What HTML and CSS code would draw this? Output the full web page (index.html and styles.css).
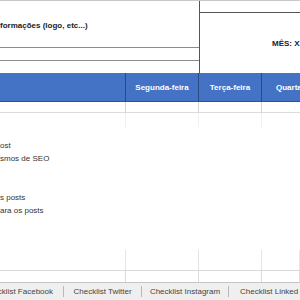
FILE: index.html
```html
<!DOCTYPE html>
<html lang="pt">
<head>
<meta charset="utf-8">
<link rel="stylesheet" href="styles.css">
</head>
<body>
<div class="sheet">
  <div class="top">
    <div class="info">
      <div class="info-title">formações (logo, etc...)</div>
      <div class="info-row"></div>
      <div class="info-row last"></div>
    </div>
    <div class="month">
      <div class="month-strip"></div>
      <div class="month-label">MÊS: XX</div>
    </div>
  </div>
  <div class="head">
    <div class="hcell"></div>
    <div class="hcell">Segunda-feira</div>
    <div class="hcell">Terça-feira</div>
    <div class="hcell last">Quarta-feira</div>
  </div>
  <div class="row r1">
    <div class="cell"></div><div class="cell"></div><div class="cell"></div><div class="cell"></div>
  </div>
  <div class="row r2">
    <div class="cell"></div><div class="cell"></div><div class="cell"></div><div class="cell"></div>
  </div>
  <div class="notes">
    <div class="note">ost</div>
    <div class="note">smos de SEO</div>
    <div class="note"></div>
    <div class="note"></div>
    <div class="note">s posts</div>
    <div class="note">ara os posts</div>
  </div>
  <div class="row r3">
    <div class="cell"></div><div class="cell"></div><div class="cell"></div><div class="cell"></div>
  </div>
  <div class="row r4">
    <div class="cell"></div><div class="cell"></div><div class="cell"></div><div class="cell"></div>
  </div>
  <div class="tabs">
    <div class="tab first"><span>Checklist Facebook</span></div>
    <div class="tab w2"><span>Checklist Twitter</span></div>
    <div class="tab w3"><span>Checklist Instagram</span></div>
    <div class="tab w4"><span>Checklist Linked In</span></div>
  </div>
</div>
</body>
</html>
```
FILE: styles.css
```css
* { box-sizing: border-box; }
html, body { margin: 0; padding: 0; background: #fff; }
.sheet {
  width: 300px;
  height: 300px;
  overflow: hidden;
  display: flex;
  flex-direction: column;
  font-family: "Liberation Sans", Arial, sans-serif;
  color: #222;
}
.top {
  height: 73px;
  flex: none;
  display: grid;
  grid-template-columns: 199px 1fr;
  border-top: 1px solid #c8c8c8;
}
.info {
  display: grid;
  grid-template-rows: 47px 13px 1fr;
}
.info-title {
  border-bottom: 1px solid #8c8c8c;
  font-weight: bold;
  font-size: 8px;
  display: flex;
  align-items: center;
  padding-top: 2px;
  white-space: nowrap;
}
.info-row { border-bottom: 1px solid #8c8c8c; }
.info-row.last { border-bottom: none; }
.month {
  border-left: 1px solid #555;
  display: flex;
  flex-direction: column;
}
.month-strip {
  height: 12px;
  flex: none;
  border-bottom: 1px solid #555;
}
.month-label {
  font-weight: bold;
  font-size: 8px;
  padding: 26px 0 0 72px;
  white-space: nowrap;
}
.head {
  height: 29px;
  flex: none;
  display: grid;
  grid-template-columns: 126px 73px 63px 1fr;
  background: #4472c4;
  border-bottom: 1px solid #2f528f;
}
.hcell {
  border-right: 1px solid #2a4a85;
  color: #fff;
  font-weight: bold;
  font-size: 8px;
  display: flex;
  align-items: center;
  justify-content: center;
  white-space: nowrap;
  overflow: hidden;
  padding-top: 1px;
}
.hcell.last { border-right: none; justify-content: flex-start; padding-left: 14px; }
.row {
  flex: none;
  display: grid;
  grid-template-columns: 126px 73px 63px 1fr;
}
.r1 { height: 11px; border-bottom: 1px solid #dcdcdc; }
.r1 .cell { border-right: 1px solid #d4d4d4; }
.r2 { height: 14px; }
.r2 .cell { border-right: 1px solid #f0f0f0; }
.cell:last-child { border-right: none; }
.notes {
  flex: 1;
  padding-top: 12px;
  font-size: 8px;
  color: #333;
}
.note { height: 13px; line-height: 13px; white-space: nowrap; }
.r3 { height: 21px; border-bottom: 1px solid #d8d8d8; }
.r3 .cell { border-right: 1px solid #e4e4e4; }
.r4 { height: 11px; }
.r4 .cell { border-right: 1px solid #dcdcdc; }
.tabs {
  height: 18px;
  flex: none;
  display: flex;
  background: #efefef;
  border-top: 1px solid #c6c6c6;
  font-size: 8px;
  color: #444;
  white-space: nowrap;
}
.tab {
  flex: none;
  display: flex;
  align-items: center;
  justify-content: center;
  overflow: hidden;
  border-right: 1px solid #b8b8b8;
  margin: 3px 0;
}
.tab.first { width: 64px; justify-content: flex-end; padding-right: 10px; }
.tab.w2 { width: 78px; }
.tab.w3 { width: 87px; }
.tab.w4 { width: 90px; justify-content: flex-start; padding-left: 11px; border-right: none; }
```
